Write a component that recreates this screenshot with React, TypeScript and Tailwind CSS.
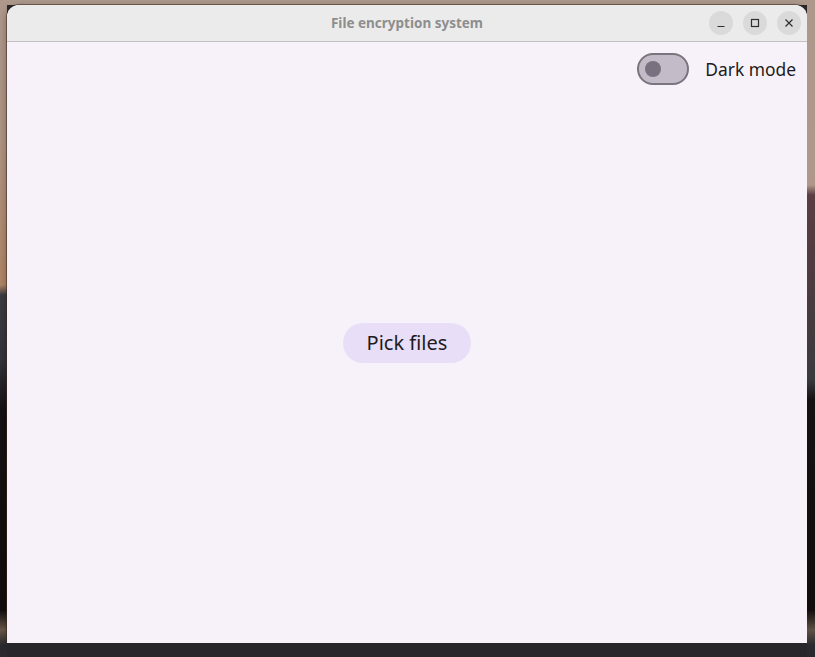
import React from "react";

export default function App() {
  return (
    <div className="flex w-[815px] h-[657px] overflow-hidden bg-[#2a2a2e]" style={{ fontFamily: '"Noto Sans", sans-serif' }}>
      <div className="w-[7px] h-full shrink-0 bg-[linear-gradient(to_bottom,#ad988b_0px,#b09482_150px,#b08566_285px,#3c3c42_295px,#33333a_360px,#161112_410px,#120d0c_610px,#6b5a4c_630px,#2a2a2e_645px)]" />
      <div className="flex flex-col w-[800px] h-full shrink-0">
        <div className="h-[5px] shrink-0 bg-[#ae9a8d]" />
        <div className="flex flex-col h-[638px] rounded-t-[12px] overflow-hidden shadow-[0_0_0_1px_rgba(60,40,30,0.55),0_2px_8px_rgba(0,0,0,0.35)] bg-[#f7f2f9]">
          <div className="relative flex items-center justify-center h-[37px] shrink-0 bg-[#ebebeb] border-b border-[#c3c0c3]">
            <span className="text-[13.5px] font-bold text-[#8e8e8e]">File encryption system</span>
            <div className="absolute right-[6px] top-[6px] flex gap-[10px]">
              <div className="w-[24px] h-[24px] rounded-full bg-[#dadada] flex items-center justify-center">
                <svg width="10" height="10" viewBox="0 0 10 10"><path d="M1.5 8.5h7" stroke="#2e2e2e" strokeWidth="1.2" /></svg>
              </div>
              <div className="w-[24px] h-[24px] rounded-full bg-[#dadada] flex items-center justify-center">
                <svg width="10" height="10" viewBox="0 0 10 10"><rect x="1.5" y="1.5" width="7" height="7" fill="none" stroke="#2e2e2e" strokeWidth="1.2" /></svg>
              </div>
              <div className="w-[24px] h-[24px] rounded-full bg-[#dadada] flex items-center justify-center">
                <svg width="10" height="10" viewBox="0 0 10 10"><path d="M1.5 1.5l7 7M8.5 1.5l-7 7" stroke="#2e2e2e" strokeWidth="1.2" /></svg>
              </div>
            </div>
          </div>
          <div className="grid flex-1">
            <div className="[grid-area:1/1] self-start justify-self-end flex items-center gap-[16px] pt-[11px] pr-[11px]">
              <div className="w-[52px] h-[32px] rounded-full border-2 border-[#79747e] bg-[#c3bcc8] flex items-center pl-[6px]">
                <div className="w-[16px] h-[16px] rounded-full bg-[#79717f]" />
              </div>
              <span className="text-[17.4px] text-[#1d1b20] leading-none pt-[2px]">Dark mode</span>
            </div>
            <div className="[grid-area:1/1] self-center justify-self-center">
              <button className="h-[40px] w-[128px] rounded-full bg-[#e8def8] text-[20px] text-[#1d1b20] flex items-center justify-center">Pick files</button>
            </div>
          </div>
        </div>
        <div className="flex-1 bg-[#27272b]" />
      </div>
      <div className="w-[8px] h-full shrink-0 bg-[linear-gradient(to_bottom,#ad988b_0px,#b0978a_185px,#5b3d42_195px,#4a3a3f_300px,#3a3a3e_380px,#151112_400px,#120d0c_610px,#5e5044_630px,#2a2a2e_645px)]" />
    </div>
  );
}
